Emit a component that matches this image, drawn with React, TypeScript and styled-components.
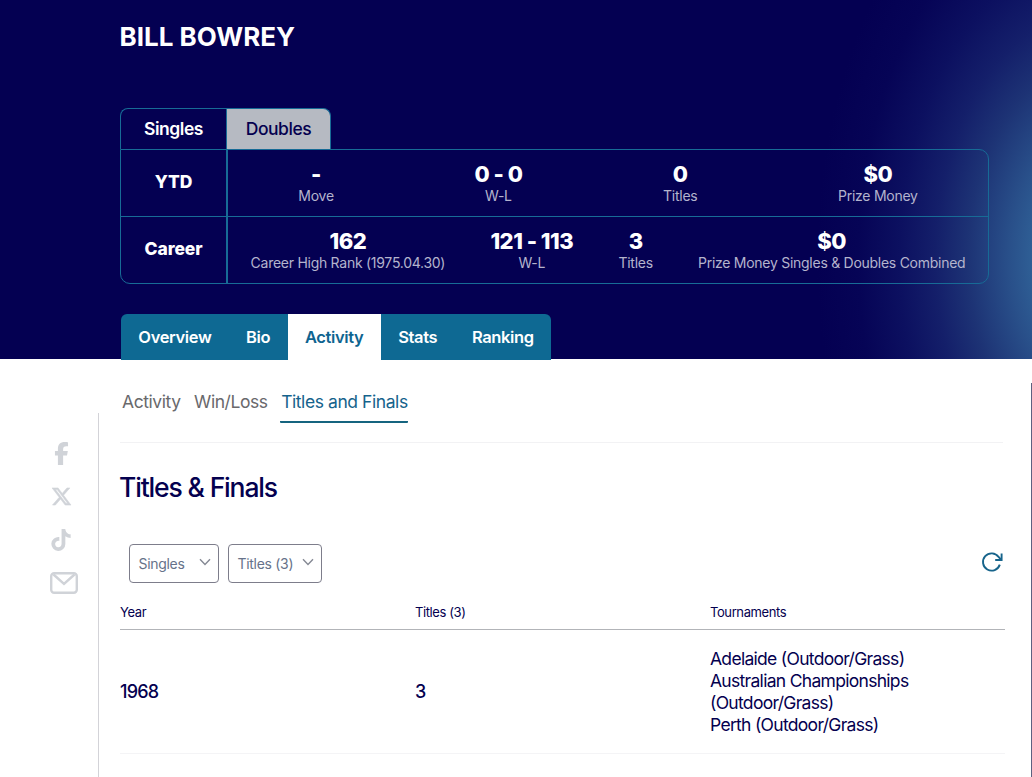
import React from 'react';
import styled, { createGlobalStyle } from 'styled-components';
import { FaFacebookF, FaTiktok, FaXTwitter } from 'react-icons/fa6';

const GlobalStyle = createGlobalStyle`
  * {
    box-sizing: border-box;
  }
  body {
    margin: 0;
    background: #ffffff;
    color: #04004f;
    font-family: Inter, 'Liberation Sans', sans-serif;
    overflow: hidden;
  }
`;

// Header
const Page = styled.div`
  width: 1032px;
  height: 777px;
  overflow: hidden;
`;

const Hero = styled.header`
  display: flex;
  flex-direction: column;
  height: 359px;
  padding: 20px 43px 0 120px;
  background:
    radial-gradient(ellipse 275px 430px at 1092px 258px, #3a76aa 0%, #2f6096 21%, #29508a 30%, #1d3375 45%, #141f6a 57%, #0c1060 70%, #060456 85%, #040052 100%)
    #040052;
`;

const PlayerName = styled.h1`
  margin: 0 0 55px;
  font-size: 26px;
  line-height: 33px;
  font-weight: 650;
  letter-spacing: 0;
  text-indent: -0.5px;
  color: #ffffff;
`;

const StatsTabs = styled.div`
  display: flex;
  flex-shrink: 0;
  height: 41px;
`;

const StatsTab = styled.button<{ $active?: boolean }>`
  width: ${({ $active }) => ($active ? '106px' : '105px')};
  padding: 0 0 2px;
  border: 1px solid #176b96;
  border-bottom: 0;
  border-right-width: ${({ $active }) => ($active ? 0 : '1px')};
  border-radius: ${({ $active }) => ($active ? '8px 0 0 0' : '0 8px 0 0')};
  background: ${({ $active }) => ($active ? 'transparent' : '#b6bac2')};
  color: ${({ $active }) => ($active ? '#ffffff' : '#04004f')};
  font: ${({ $active }) => ($active ? 600 : 500)} 17.5px Inter, sans-serif;
  letter-spacing: -0.45px;
`;

const StatsBox = styled.div`
  width: 869px;
  flex-shrink: 0;
  border: 1px solid #176b96;
  border-radius: 0 10px 10px 10px;
  border-top-left-radius: 0;
`;

const StatsRow = styled.div`
  display: flex;
  height: 66px;

  & + & {
    height: 67px;
    border-top: 1px solid #176b96;
  }
`;

const StatsLabel = styled.div`
  display: flex;
  align-items: center;
  justify-content: center;
  width: 107px;
  padding-bottom: 3px;
  border-right: 2px solid #176b96;
  font-size: 17.5px;
  font-weight: 800;
  letter-spacing: -0.1px;
  color: #ffffff;
`;

const StatsValues = styled.div`
  display: flex;
  flex: 1;
  justify-content: space-around;
  padding-top: 13px;
`;

const Stat = styled.div`
  text-align: center;
  color: #ffffff;
  font-size: 22px;
  line-height: 22px;
  font-weight: 800;
  letter-spacing: -0.5px;
`;

const StatName = styled.div`
  color: #b4b4cd;
  font-size: 14px;
  line-height: 22px;
  font-weight: 400;
  letter-spacing: -0.27px;
`;

const MainNav = styled.nav`
  display: flex;
  width: 430px;
  height: 46px;
  flex-shrink: 0;
  margin: 30px 0 0 1px;
  border-radius: 6px 6px 0 0;
  overflow: hidden;
  background: #0e6993;
`;

const NavItem = styled.a<{ $active?: boolean }>`
  flex-grow: 1;
  padding: 0 17px;
  text-align: center;
  background: ${({ $active }) => ($active ? '#ffffff' : 'transparent')};
  color: ${({ $active }) => ($active ? '#0e6490' : '#ffffff')};
  font-size: 16.5px;
  line-height: 46px;
  font-weight: 600;
  letter-spacing: -0.37px;
`;

// Body
const Body = styled.div`
  display: flex;
  height: 418px;
`;

const ShareBar = styled.aside`
  display: flex;
  flex-direction: column;
  align-items: center;
  width: 99px;
  height: 364px;
  margin-top: 54px;
  padding: 28px 0 0 24px;
  border-right: 1px solid #d3d3d8;
  color: #d0d3d8;

  svg {
    display: block;
  }
`;

const ShareLink = styled.a`
  display: flex;
  align-items: center;
  justify-content: center;
  width: 28px;
  height: 24px;
  margin-bottom: 19.5px;

  &:last-child {
    width: 33px;
    height: 22px;
    justify-content: flex-end;
  }
`;

const XLink = styled(ShareLink)`
  svg {
    stroke: currentColor;
    stroke-width: 14px;
  }
`;

const Content = styled.main`
  width: 906px;
  padding: 24px 0 0 21px;
`;

const RightRule = styled.div`
  width: 1px;
  margin: 24px 0 0 auto;
  background: #5c6180;
`;

const SubNav = styled.nav`
  display: flex;
  gap: 12.5px;
  width: 883px;
  height: 60px;
  padding-left: 1px;
  border-bottom: 1px solid #f2f2f4;
`;

const SubNavItem = styled.a<{ $active?: boolean }>`
  height: 40px;
  padding-left: 1px;
  border-bottom: 2px solid ${({ $active }) => ($active ? '#15647f' : 'transparent')};
  border-radius: 1px;
  color: ${({ $active }) => ($active ? '#15638c' : '#69696c')};
  font-size: 17.5px;
  line-height: 37px;
  letter-spacing: -0.43px;
`;

const SectionTitle = styled.h2`
  margin: 28px 0 41px;
  font-size: 26.5px;
  line-height: 32px;
  font-weight: 550;
  letter-spacing: -1.15px;
  text-indent: -1px;
`;

const Toolbar = styled.div`
  display: flex;
  align-items: flex-start;
  gap: 9px;
  height: 39px;
  padding-left: 9px;
`;

const Select = styled.button<{ $width: number }>`
  display: flex;
  align-items: center;
  justify-content: space-between;
  width: ${({ $width }) => $width}px;
  height: 39px;
  padding: 0 7px 0 8.5px;
  border: 1px solid #7d7d8b;
  border-radius: 4px;
  background: #ffffff;
  color: #66728a;
  font: 400 14px Inter, sans-serif;
  letter-spacing: -0.3px;

  svg {
    margin-top: -3px;
  }
`;

const Refresh = styled.button`
  width: 24px;
  height: 24px;
  margin: 6px 1px 0 auto;
  padding: 0;
  border: 0;
  background: transparent;
  color: #17648b;
`;

const Table = styled.div`
  width: 885px;
`;

const TableRow = styled.div`
  display: grid;
  grid-template-columns: repeat(3, 295px);
  align-items: center;
  height: 124px;
  border-bottom: 1px solid #f4f4f6;
`;

const TableHead = styled(TableRow)`
  height: 47px;
  padding-top: 12px;
  border-color: #b2b4b8;
  font-size: 13px;
  letter-spacing: -0.4px;
`;

const Total = styled.div`
  font-size: 18px;
  font-weight: 500;
  letter-spacing: -0.8px;
`;

const Tournament = styled.div`
  width: 230px;
  font-size: 17.5px;
  line-height: 22px;
  letter-spacing: -0.7px;
`;

const Chevron = () => (
  <svg width="12" height="8" viewBox="0 0 12 8" fill="none" stroke="#858994" strokeWidth="1.4">
    <path d="M1 1.2 6 6.4 11 1.2" />
  </svg>
);

const MailIcon = () => (
  <svg width="28" height="22" viewBox="0 0 28 22" fill="none" stroke="currentColor" strokeWidth="2.4">
    <rect x="1.2" y="1.2" width="25.6" height="19.6" rx="3" />
    <path d="M3.5 2.5 14 12 24.5 2.5" />
  </svg>
);

const RefreshIcon = () => (
  <svg width="24" height="24" viewBox="0 0 24 24" fill="none" stroke="currentColor" strokeWidth="1.9">
    <path d="M19.8 14.6A8.6 8.6 0 1 1 18.6 7L21 9.6" />
    <path d="M21.6 3.4V10H15.2" />
  </svg>
);

const stats = [
  {
    label: 'YTD',
    values: [['-', 'Move'], ['0 - 0', 'W-L'], ['0', 'Titles'], ['$0', 'Prize Money']],
  },
  {
    label: 'Career',
    values: [
      ['162', 'Career High Rank (1975.04.30)'],
      ['121 - 113', 'W-L'],
      ['3', 'Titles'],
      ['$0', 'Prize Money Singles & Doubles Combined'],
    ],
  },
];

const sections = ['Overview', 'Bio', 'Activity', 'Stats', 'Ranking'];
const views = ['Activity', 'Win/Loss', 'Titles and Finals'];
const tournaments = [
  'Adelaide (Outdoor/Grass)',
  'Australian Championships (Outdoor/Grass)',
  'Perth (Outdoor/Grass)',
];

const App: React.FC = () => {
  return (
    <Page>
      <GlobalStyle />
      <Hero>
        <PlayerName>BILL BOWREY</PlayerName>
        <StatsTabs>
          <StatsTab $active>Singles</StatsTab>
          <StatsTab>Doubles</StatsTab>
        </StatsTabs>
        <StatsBox>
          {stats.map((row) => (
            <StatsRow key={row.label}>
              <StatsLabel>{row.label}</StatsLabel>
              <StatsValues>
                {row.values.map(([value, name]) => (
                  <Stat key={name}>
                    {value}
                    <StatName>{name}</StatName>
                  </Stat>
                ))}
              </StatsValues>
            </StatsRow>
          ))}
        </StatsBox>
        <MainNav>
          {sections.map((name) => (
            <NavItem key={name} $active={name === 'Activity'}>{name}</NavItem>
          ))}
        </MainNav>
      </Hero>
      <Body>
        <ShareBar>
          <ShareLink><FaFacebookF size={23} /></ShareLink>
          <XLink><FaXTwitter size={21} /></XLink>
          <ShareLink><FaTiktok size={22} /></ShareLink>
          <ShareLink><MailIcon /></ShareLink>
        </ShareBar>
        <Content>
          <SubNav>
            {views.map((name) => (
              <SubNavItem key={name} $active={name === 'Titles and Finals'}>{name}</SubNavItem>
            ))}
          </SubNav>
          <SectionTitle>Titles &amp; Finals</SectionTitle>
          <Toolbar>
            <Select $width={90}>Singles <Chevron /></Select>
            <Select $width={94}>Titles (3) <Chevron /></Select>
            <Refresh aria-label="Refresh"><RefreshIcon /></Refresh>
          </Toolbar>
          <Table>
            <TableHead>
              <div>Year</div>
              <div>Titles (3)</div>
              <div>Tournaments</div>
            </TableHead>
            <TableRow>
              <Total>1968</Total>
              <Total>3</Total>
              <div>
                {tournaments.map((name) => (
                  <Tournament key={name}>{name}</Tournament>
                ))}
              </div>
            </TableRow>
          </Table>
        </Content>
        <RightRule />
      </Body>
    </Page>
  );
};

export default App;
